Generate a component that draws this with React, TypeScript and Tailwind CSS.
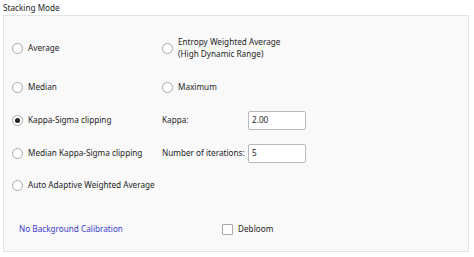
import React from 'react';

const Radio: React.FC<{ checked?: boolean }> = ({ checked }) => (
  <span className="w-[11px] h-[11px] rounded-full border border-[#a8a8a8] bg-white flex items-center justify-center shrink-0">
    {checked && <span className="w-[5px] h-[5px] rounded-full bg-[#222]" />}
  </span>
);

const Option: React.FC<{ label: React.ReactNode; checked?: boolean }> = ({ label, checked }) => (
  <div className="flex items-center gap-[5px]">
    <Radio checked={checked} />
    <span className="leading-[12px]">{label}</span>
  </div>
);

const Field: React.FC<{ label: string; value: string }> = ({ label, value }) => (
  <div className="flex items-center">
    <span className="w-[86px]">{label}</span>
    <div className="w-[58px] h-[19px] bg-white border border-[#b9b9b9] rounded-[2px] flex items-center px-[3px]">{value}</div>
  </div>
);

const App: React.FC = () => {
  return (
    <div className="w-[474px] h-[257px] bg-white text-[#1e1e1e] text-[8.2px] font-['Noto_Sans',sans-serif] pt-[1px]">
      <div className="h-[14px] pl-[3px] flex items-center">Stacking Mode</div>
      <div className="mx-[3px] w-[466px] h-[237px] bg-[#f9f9f9] border border-[#e3e3e3] pl-[8px]">
        <div className="grid grid-cols-[150px_1fr]">
          <div className="h-[20px] mt-[22px] flex items-center"><Option label="Average" /></div>
          <div className="h-[20px] mt-[22px] flex items-center">
            <Option label={<>Entropy Weighted Average<br />(High Dynamic Range)</>} />
          </div>
          <div className="h-[20px] mt-[19px] flex items-center"><Option label="Median" /></div>
          <div className="h-[20px] mt-[19px] flex items-center"><Option label="Maximum" /></div>
          <div className="h-[20px] mt-[13px] flex items-center"><Option label="Kappa-Sigma clipping" checked /></div>
          <div className="h-[20px] mt-[13px] flex items-center"><Field label="Kappa:" value="2.00" /></div>
          <div className="h-[20px] mt-[13px] flex items-center"><Option label="Median Kappa-Sigma clipping" /></div>
          <div className="h-[20px] mt-[13px] flex items-center"><Field label="Number of iterations:" value="5" /></div>
          <div className="h-[20px] mt-[12px] flex items-center col-span-2"><Option label="Auto Adaptive Weighted Average" /></div>
        </div>
        <div className="h-[20px] mt-[24px] flex items-center">
          <span className="ml-[7px] w-[203px] text-[#3a3acf]">No Background Calibration</span>
          <span className="w-[11px] h-[11px] bg-white border border-[#a8a8a8] rounded-[1px]" />
          <span className="ml-[5px]">Debloom</span>
        </div>
      </div>
    </div>
  );
};

export default App;
